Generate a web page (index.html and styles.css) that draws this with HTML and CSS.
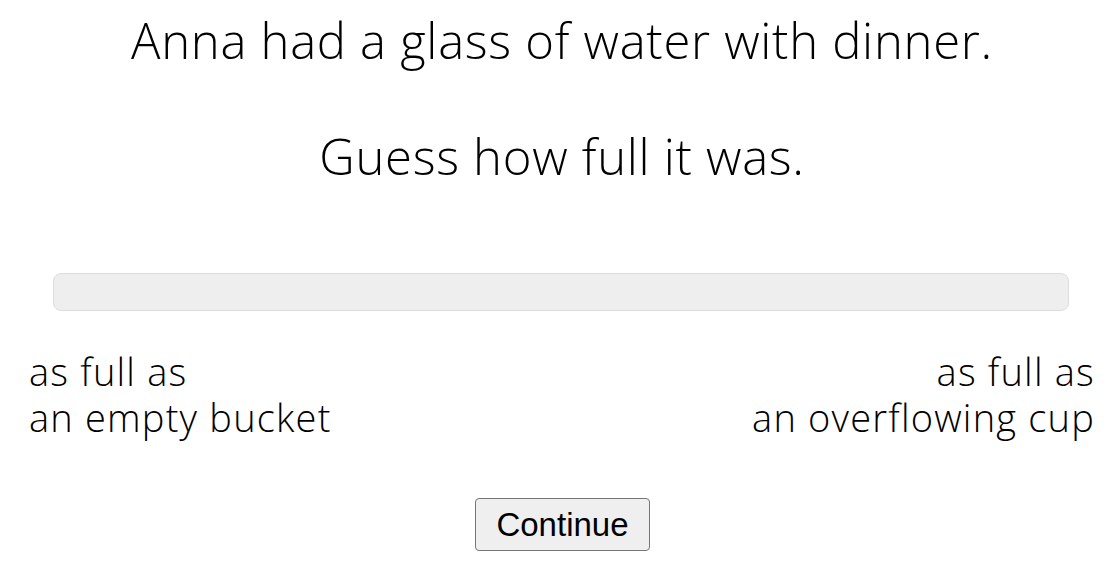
FILE: index.html
```html
<!DOCTYPE html>
<html>
<head>
<meta charset="utf-8">
<link rel="stylesheet" href="styles.css">
</head>
<body>
<div class="page">
  <div class="stimulus">
    <p class="line">Anna had a glass of water with dinner.</p>
    <p class="line">Guess how full it was.</p>
  </div>
  <div class="slider-wrap">
    <div class="track"></div>
    <div class="labels">
      <div class="label left">as full as<br>an empty bucket</div>
      <div class="label right">as full as<br>an overflowing cup</div>
    </div>
  </div>
  <div class="actions">
    <button class="btn" type="button">Continue</button>
  </div>
</div>
</body>
</html>
```
FILE: styles.css
```css
html, body {
  margin: 0;
  padding: 0;
  background: #fff;
}
.page {
  width: 1066px;
  margin-left: 29px;
  padding-top: 11px;
  font-family: "Open Sans", sans-serif;
  font-weight: 300;
  color: #000;
}
.stimulus {
  text-align: center;
}
.line {
  margin: 0;
  font-size: 49px;
  line-height: 58px;
  letter-spacing: 0.7px;
}
.line + .line {
  margin-top: 58px;
}
.slider-wrap {
  margin-top: 88px;
}
.track {
  margin: 0 26px 0 24px;
  height: 36px;
  background: #eeeeee;
  border: 1px solid #dddddd;
  border-radius: 8px;
}
.labels {
  display: flex;
  justify-content: space-between;
  margin-top: 37px;
  font-size: 38px;
  line-height: 46px;
  letter-spacing: 1.2px;
}
.label.right {
  text-align: right;
}
.actions {
  display: flex;
  justify-content: center;
  margin-top: 58px;
  padding-left: 1px;
}
.btn {
  font-family: "Liberation Sans", Arial, sans-serif;
  font-size: 33px;
  line-height: 37px;
  padding: 7px 20px;
  background: #efefef;
  border: 1px solid #767676;
  border-radius: 4px;
  color: #000;
}
```
